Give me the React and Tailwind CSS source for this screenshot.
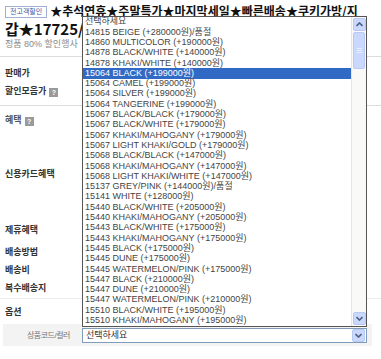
import React from "react";

const options = [
  "14815 BEIGE (+280000원)/품절",
  "14860 MULTICOLOR (+190000원)",
  "14878 BLACK/WHITE (+140000원)",
  "14878 KHAKI/WHITE (+140000원)",
  "15064 BLACK (+199000원)",
  "15064 CAMEL (+199000원)",
  "15064 SILVER (+199000원)",
  "15064 TANGERINE (+199000원)",
  "15067 BLACK/BLACK (+179000원)",
  "15067 BLACK/WHITE (+179000원)",
  "15067 KHAKI/MAHOGANY (+179000원)",
  "15067 LIGHT KHAKI/GOLD (+179000원)",
  "15068 BLACK/BLACK (+147000원)",
  "15068 KHAKI/MAHOGANY (+147000원)",
  "15068 LIGHT KHAKI/WHITE (+147000원)",
  "15137 GREY/PINK (+144000원)/품절",
  "15141 WHITE (+128000원)",
  "15440 BLACK/WHITE (+205000원)",
  "15440 KHAKI/MAHOGANY (+205000원)",
  "15443 BLACK/WHITE (+175000원)",
  "15443 KHAKI/MAHOGANY (+175000원)",
  "15445 BLACK (+175000원)",
  "15445 DUNE (+175000원)",
  "15445 WATERMELON/PINK (+175000원)",
  "15447 BLACK (+210000원)",
  "15447 DUNE (+210000원)",
  "15447 WATERMELON/PINK (+210000원)",
  "15510 BLACK/WHITE (+195000원)",
  "15510 KHAKI/MAHOGANY (+195000원)",
];

const Help = () => (
  <span className="ml-[3px] inline-flex h-[9px] w-[9px] items-center justify-center bg-[#9a9a9a] text-[7px] font-bold leading-none text-white">
    ?
  </span>
);

const Chevron = ({ up }) => (
  <svg width="7" height="5" viewBox="0 0 7 5">
    <path
      d={up ? "M0.5 4 L3.5 1 L6.5 4" : "M0.5 1 L3.5 4 L6.5 1"}
      fill="none"
      stroke="#4d6185"
      strokeWidth="1.6"
    />
  </svg>
);

const ArrowBtn = ({ up }) => (
  <div className="flex h-[13px] w-[13px] items-center justify-center rounded-[2px] border border-[#b7c9f4] bg-[#c9d8fc]">
    <Chevron up={up} />
  </div>
);

const Label = ({ children, className = "" }) => (
  <div className={`flex h-[18px] items-center pl-[5px] text-[9px] font-bold text-[#333] ${className}`}>
    {children}
  </div>
);

export default function App() {
  return (
    <div
      className="relative h-[359px] w-[381px] overflow-hidden bg-white"
      style={{ fontFamily: '"Liberation Sans", "Noto Sans CJK KR", sans-serif' }}
    >
      {/* 상품명 */}
      <div className="h-[57px] border-b border-[#dcdcdc]">
        <div className="flex items-center pt-[3px] whitespace-nowrap">
          <span className="ml-[5px] mt-[3px] border border-[#9fb0d0] px-[4px] text-[7px] leading-[10px] text-[#3a5ba8]">
            전고객할인
          </span>
          <span className="ml-[3px] text-[12px] font-bold leading-[15px] text-[#111]" style={{ fontFamily: '"Noto Sans CJK KR", sans-serif' }}>
            ★추석연휴★주말특가★마지막세일★빠른배송★쿠키가방/지
          </span>
        </div>
        <div
          className="pl-[5px] pt-[2px] text-[15px] font-bold leading-[18px] text-[#111] whitespace-nowrap"
          style={{ fontFamily: '"Noto Sans CJK KR", sans-serif' }}
        >
          갑★17725/1
        </div>
        <div className="pl-[5px] pt-[1px] text-[9px] leading-[10px] text-[#8a8a8a]">정품 80% 할인행사</div>
      </div>

      <div className="h-[49px] border-b border-[#dcdcdc] pt-[8px]">
        <Label>판매가</Label>
        <Label>
          할인모음가 <Help />
        </Label>
      </div>

      <div className="h-[193px] border-b border-[#ececec] pt-[6px]">
        <Label className="text-[#555]">
          혜택 <Help />
        </Label>
        <Label className="mt-[36px]">신용카드혜택</Label>
        <Label className="mt-[38px]">제휴혜택</Label>
        <Label className="mt-[4px]">배송방법</Label>
        <Label>배송비</Label>
        <Label>복수배송지</Label>
      </div>

      <div className="pt-[5px]">
        <Label>옵션</Label>
        <div className="ml-[3px] mr-[9px] mt-[2px] flex h-[22px] items-start bg-[#f3f3f3] pt-[4px]">
          <div className="w-[79px] whitespace-nowrap pl-[24px] pt-[2px] text-[8px] tracking-[-0.5px] text-[#777]">상품코드/컬러</div>
          <div className="flex h-[15px] w-[285px] items-center justify-between border border-[#7f9db9] bg-white pl-[3px] pr-[1px]">
            <span className="text-[9px] text-[#333]">선택하세요</span>
            <ArrowBtn />
          </div>
        </div>
      </div>

      {/* 펼쳐진 목록 */}
      <div className="absolute left-[82px] top-[16px] flex h-[311px] w-[285px] border border-[#555] bg-white">
        <div className="flex-1">
          <div className="flex h-[10.3px] items-center pl-[2px] text-[9px] text-[#444]">선택하세요</div>
          {options.map((o, i) => (
            <div
              key={o}
              className={`flex h-[10.3px] items-center whitespace-nowrap pl-[2px] text-[9px] ${
                i === 4 ? "bg-[#316ac5] text-white" : "text-[#444]"
              }`}
            >
              {o}
            </div>
          ))}
        </div>
        <div className="flex w-[15px] flex-col border-l border-[#e4e4e4] bg-[#f9f9f7] px-[1px] py-[1px]">
          <ArrowBtn up />
          <div className="mt-[1px] flex h-[37px] flex-col items-center justify-center gap-[1px] rounded-[2px] border border-[#b7c9f4] bg-[#c9d8fc]">
            <div className="h-px w-[5px] bg-[#e8eefc]" />
            <div className="h-px w-[5px] bg-[#e8eefc]" />
            <div className="h-px w-[5px] bg-[#e8eefc]" />
          </div>
          <div className="flex-1" />
          <ArrowBtn />
        </div>
      </div>
    </div>
  );
}
